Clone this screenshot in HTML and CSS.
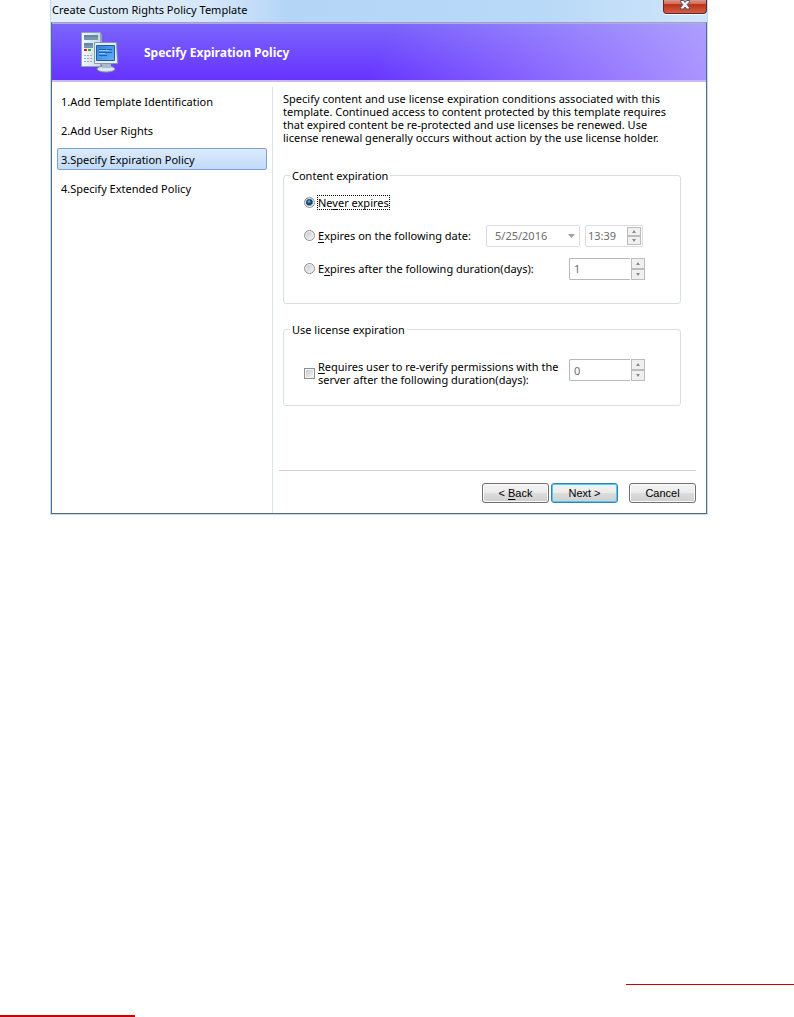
FILE: index.html
```html
<!DOCTYPE html>
<html lang="en">
<head>
    <meta charset="UTF-8">
    <meta name="viewport" content="width=device-width, initial-scale=1.0">
    <title>Create Custom Rights Policy Template</title>
    <link rel="stylesheet" href="styles.css">
</head>
<body>
    <div class="window">
        <div class="titlebar">
            <span class="titlebar-text">Create Custom Rights Policy Template</span>
            <button type="button" class="close" aria-label="Close">
                <svg width="12" height="10" viewBox="0 0 12 10">
                    <path d="M1.500 .5h3L6 2.400 7.500 .5h3v1.300L8.200 4.700l2.300 3v1.300h-3L6 7 4.500 9h-3V7.700l2.300-3-2.300-2.900z" fill="#f4f4f8" stroke="#54506a"/>
                </svg>
            </button>
        </div>
        <div class="dialog">
            <header class="banner">
                <svg class="banner-icon" width="40" height="42" viewBox="0 0 40 42">
                    <defs>
                        <linearGradient id="screen" x1="0" y1="0" x2="1" y2="1">
                            <stop offset="0" stop-color="#2f7fe0"/>
                            <stop offset="1" stop-color="#63b0f5"/>
                        </linearGradient>
                        <linearGradient id="tower" x1="0" y1="0" x2="1" y2="0">
                            <stop offset="0" stop-color="#f4f8fb"/>
                            <stop offset="1" stop-color="#cbd9e3"/>
                        </linearGradient>
                    </defs>
                    <path d="M1.500 1.500h19v34h-19z" fill="url(#tower)" stroke="#8ea3b5"/>
                    <path d="M20 2l2 2v30l-2 2z" fill="#8fa4b6"/>
                    <path d="M4 4h14v5H4z" fill="#7596b3"/>
                    <path d="M4 12h9v5H4z" fill="#7596b3"/>
                    <path d="M4 5h14M4 13h9" stroke="#547897"/>
                    <path d="M4 18h3v2H4z" fill="#e02020"/>
                    <path d="M8 18h3v2H8z" fill="#25b52c"/>
                    <path d="M4 24.500h9M4 27.500h9M4 30.500h9" stroke="#9aabb9" stroke-dasharray="2 1"/>
                    <ellipse cx="26" cy="38" rx="9" ry="3" fill="#dce6ee" stroke="#7e93a6"/>
                    <path d="M22 32h9v5h-9z" fill="#a9bac8"/>
                    <path d="M14.500 11.500h22l1 21h-23z" fill="#e2edf5" stroke="#8499aa"/>
                    <path d="M16.500 14.500h18v15h-18z" fill="url(#screen)" stroke="#285b9d"/>
                    <path d="M19 18.500h7M27 18.500h5M19 21.500h13M19 24.500h8" stroke="#215eb0"/>
                    <path d="M19 19.500h10M19 22.500h6" stroke="#8cc7fa"/>
                </svg>
                <h1>Specify Expiration Policy</h1>
            </header>
            <div class="columns">
                <nav class="steps">
                    <a href="#identification">1.Add Template Identification</a>
                    <a href="#rights">2.Add User Rights</a>
                    <a href="#expiration" class="active" aria-current="step">3.Specify Expiration Policy</a>
                    <a href="#extended">4.Specify Extended Policy</a>
                </nav>
                <form class="content">
                    <p class="intro">Specify content and use license expiration conditions associated with this<br>
                        template. Continued access to content protected by this template requires<br>
                        that expired content be re-protected and use licenses be renewed. Use<br>
                        license renewal generally occurs without action by the use license holder.</p>

                    <fieldset class="content-expiration">
                        <legend>Content expiration</legend>
                        <div class="row">
                            <input type="radio" name="expires" id="never" checked>
                            <label for="never" class="focused">Ne<u>v</u>er expires</label>
                        </div>
                        <div class="row">
                            <input type="radio" name="expires" id="onDate">
                            <label for="onDate"><u>E</u>xpires on the following date:</label>
                            <div class="controls date-controls">
                                <select class="date" aria-label="Date" disabled>
                                    <option>5/25/2016</option>
                                </select>
                                <div class="spinner time">
                                    <input type="text" value="13:39" aria-label="Time" disabled>
                                    <div class="arrows">
                                        <button type="button" class="up" aria-label="Later" disabled></button>
                                        <button type="button" class="down" aria-label="Earlier" disabled></button>
                                    </div>
                                </div>
                            </div>
                        </div>
                        <div class="row">
                            <input type="radio" name="expires" id="afterDays">
                            <label for="afterDays">E<u>x</u>pires after the following duration(days):</label>
                            <div class="controls">
                                <div class="spinner">
                                    <input type="text" value="1" aria-label="Duration in days" disabled>
                                    <div class="arrows">
                                        <button type="button" class="up" aria-label="More days" disabled></button>
                                        <button type="button" class="down" aria-label="Fewer days" disabled></button>
                                    </div>
                                </div>
                            </div>
                        </div>
                    </fieldset>

                    <fieldset class="license-expiration">
                        <legend>Use license expiration</legend>
                        <div class="row">
                            <input type="checkbox" id="verify">
                            <label for="verify"><u>R</u>equires user to re-verify permissions with the<br>server after the following duration(days):</label>
                            <div class="controls">
                                <div class="spinner">
                                    <input type="text" value="0" aria-label="Re-verify after days" disabled>
                                    <div class="arrows">
                                        <button type="button" class="up" aria-label="More days" disabled></button>
                                        <button type="button" class="down" aria-label="Fewer days" disabled></button>
                                    </div>
                                </div>
                            </div>
                        </div>
                    </fieldset>

                    <div class="buttons">
                        <button type="button">&lt; <u>B</u>ack</button>
                        <button type="submit" class="default">Next &gt;</button>
                        <button type="button" class="cancel">Cancel</button>
                    </div>
                </form>
            </div>
        </div>
    </div>
    <footer class="rules">
        <div class="rule-right"></div>
        <div class="rule-left"></div>
    </footer>
</body>
</html>
```
FILE: styles.css
```css
* {
    margin: 0;
    padding: 0;
    box-sizing: border-box;
}

body {
    display: flex;
    flex-direction: column;
    min-height: 100vh;
    background: #fff;
    color: #000;
    font-family: "Noto Sans", "Open Sans", sans-serif;
    font-size: 11px;
    line-height: 13px;
}

button,
input,
select {
    font: inherit;
    color: inherit;
}

u {
    text-underline-offset: 2px;
}

/* Window frame */
.window {
    margin: 0 86px 0 50px;
    padding: 0 1px 1px;
    background: #bcdcf7;
}

.titlebar {
    display: flex;
    justify-content: space-between;
    align-items: flex-start;
    height: 22px;
    background: linear-gradient(90deg, #e4effa, #d5e7f9 24%, #b5d5f7 36%, #b8d9f8 75%, #d0e5f9);
}

.titlebar-text {
    padding: 3px 1px;
}

.close {
    display: flex;
    justify-content: center;
    width: 44px;
    height: 14px;
    border: 1px solid #5b2630;
    border-top: none;
    border-radius: 0 0 4px 4px;
    background: linear-gradient(#d9988a, #cf6a55 30%, #bd3217 35%, #d25f41);
    box-shadow: 0 1px 0 #f0f7fd;
}

.dialog {
    border: 1px solid #5a6b7e;
    border-top-color: #9aa6b8;
    background: #fff;
}

/* Purple banner */
.banner {
    display: flex;
    align-items: center;
    gap: 24px;
    height: 59px;
    padding-left: 28px;
    border-top: 1px solid #b5a5f5;
    border-bottom: 2px solid #cbb9ff;
    background: linear-gradient(115deg, rgba(255, 255, 255, 0) 50%, rgba(200, 190, 255, .7)), linear-gradient(#7b65fb, #6633ff);
}

.banner h1 {
    color: #fff;
    font-size: 12px;
    font-weight: 700;
}

.columns {
    display: flex;
    padding-top: 5px;
}

/* Steps */
.steps {
    display: flex;
    flex-direction: column;
    gap: 7px;
    flex: 0 0 221px;
    padding: 3px 5px;
    border-right: 1px solid #dde3eb;
}

.steps a {
    height: 22px;
    padding: 4px 3px;
    border: 1px solid transparent;
    border-radius: 2px;
    color: #000;
    text-decoration: none;
}

.steps .active {
    border-color: #7da2ce;
    background: linear-gradient(#dcebfc, #c1dbfc);
}

/* Form */
.content {
    flex: 1;
    padding: 5px 10px 10px 6px;
}

.intro {
    padding-left: 4px;
    white-space: nowrap;
}

fieldset {
    margin: 0 15px 0 4px;
    border: 1px solid #d5dfe5;
    border-radius: 3px;
}

legend {
    margin-left: -14px;
    padding: 0 2px;
}

.content-expiration {
    margin-top: 25px;
    padding: 3px 20px 18px;
}

.license-expiration {
    margin-top: 19px;
    padding: 23px 20px 18px;
}

.row {
    display: flex;
    align-items: center;
    gap: 3px;
}

.content-expiration .row {
    height: 33px;
}

.content-expiration .row:first-of-type {
    height: 34px;
}

.focused {
    outline: 1px dotted #000;
}

.controls {
    display: flex;
    margin-left: auto;
    padding-right: 15px;
}

.license-expiration .controls {
    padding-bottom: 6px;
}

.date-controls {
    gap: 5px;
    padding-right: 17px;
}

input[type="radio"],
input[type="checkbox"] {
    appearance: none;
    flex: none;
    width: 11px;
    height: 11px;
    border: 1px solid #8e8f8f;
    background: linear-gradient(135deg, #c3c7cb, #f6f6f6);
    box-shadow: inset 0 0 0 1px #f4f4f4;
}

input[type="radio"] {
    border-radius: 50%;
}

input[type="radio"]:checked {
    background: radial-gradient(circle at 45% 40%, #5cc5ee 0, #15527f 2px, #123a5c 3px, #e4e8eb 5px);
}

/* Date and number fields */
.date {
    appearance: none;
    width: 94px;
    height: 22px;
    padding: 0 8px;
    border: 1px solid #d9dbe3;
    border-radius: 2px;
    background: url("data:image/svg+xml,%3Csvg xmlns='http://www.w3.org/2000/svg' width='7' height='4'%3E%3Cpath d='M0 0h7L3.5 4z' fill='%23a0a0a0'/%3E%3C/svg%3E") no-repeat right 4px center #fff;
    color: #6d6d6d;
    opacity: 1;
}

.spinner {
    display: flex;
    width: 76px;
    height: 22px;
}

.spinner input {
    flex: 1;
    width: 0;
    padding-left: 4px;
    border: 1px solid #b5b8bd;
    border-right: none;
    border-radius: 2px 0 0 2px;
    background: #fff;
    color: #6d6d6d;
}

.arrows {
    display: flex;
    flex-direction: column;
    width: 15px;
    padding-left: 1px;
}

.arrows button {
    display: flex;
    flex: 1;
    align-items: center;
    justify-content: center;
    border: 1px solid #bcbcbc;
    background: #f0f0f0;
}

.arrows button::before {
    content: "";
    border: 2px solid transparent;
}

.arrows .up::before {
    border-top: none;
    border-bottom: 3px solid #8a8a8a;
}

.arrows .down::before {
    border-bottom: none;
    border-top: 3px solid #8a8a8a;
}

.time {
    width: 58px;
    padding: 1px;
    border: 1px solid #d9dbe3;
    border-radius: 2px;
}

.time input {
    padding-left: 1px;
    border: none;
}

/* Bottom buttons */
.buttons {
    display: flex;
    justify-content: flex-end;
    gap: 2px;
    margin-top: 64px;
    padding-top: 12px;
    border-top: 1px solid #cfcfcf;
}

.buttons button {
    width: 67px;
    height: 20px;
    border: 1px solid #707070;
    border-radius: 3px;
    background: linear-gradient(#f3f3f3, #ebebeb 49%, #dddddd 50%, #cfcfcf);
    box-shadow: inset 0 0 0 1px #fbfbfb;
    font-family: "Liberation Sans", Arial, sans-serif;
    font-size: 11px;
}

.buttons .default {
    border-color: #3c7fb1;
    box-shadow: inset 0 0 0 1px #45cdf5;
}

.buttons .cancel {
    margin-left: 9px;
}

/* Red rules at the foot of the page */
.rules {
    margin-top: auto;
}

.rule-right {
    width: 168px;
    height: 1px;
    margin: 0 0 30px auto;
    background: #c00;
}

.rule-left {
    width: 135px;
    height: 2px;
    background: #c00;
}
```
